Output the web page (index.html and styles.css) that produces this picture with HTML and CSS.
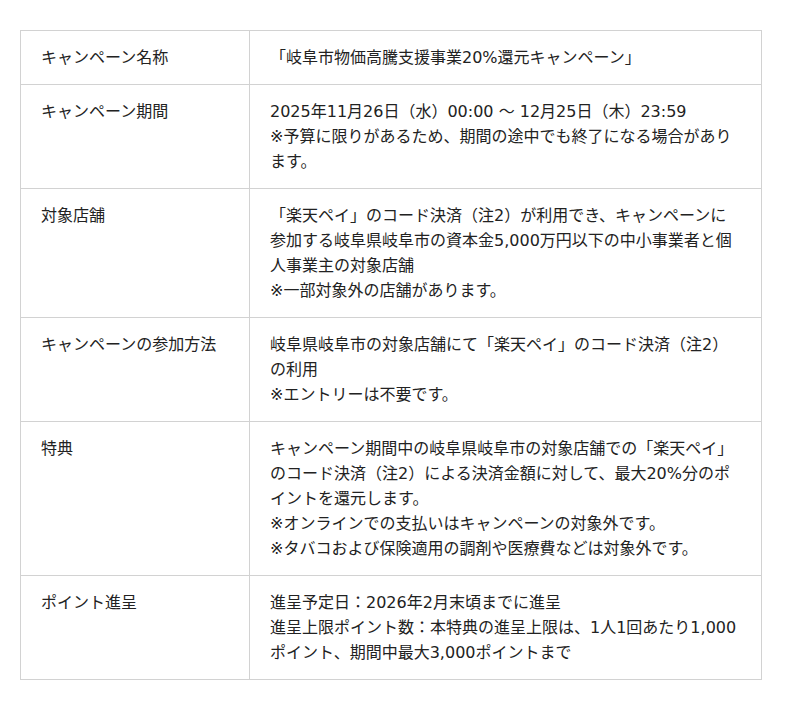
FILE: index.html
```html
<!DOCTYPE html>
<html lang="ja">
<head>
<meta charset="utf-8">
<link rel="stylesheet" href="styles.css">
</head>
<body>
<div class="wrap">
<table class="info">
<tr><th>キャンペーン名称</th><td>「岐阜市物価高騰支援事業20%還元キャンペーン」</td></tr>
<tr><th>キャンペーン期間</th><td>2025年11月26日（水）00:00 ～ 12月25日（木）23:59<br>※予算に限りがあるため、期間の途中でも終了になる場合があります。</td></tr>
<tr><th>対象店舗</th><td>「楽天ペイ」のコード決済（注2）が利用でき、キャンペーンに参加する岐阜県岐阜市の資本金5,000万円以下の中小事業者と個人事業主の対象店舗<br>※一部対象外の店舗があります。</td></tr>
<tr><th>キャンペーンの参加方法</th><td>岐阜県岐阜市の対象店舗にて「楽天ペイ」のコード決済（注2）の利用<br>※エントリーは不要です。</td></tr>
<tr><th>特典</th><td>キャンペーン期間中の岐阜県岐阜市の対象店舗での「楽天ペイ」のコード決済（注2）による決済金額に対して、最大20%分のポイントを還元します。<br>※オンラインでの支払いはキャンペーンの対象外です。<br>※タバコおよび保険適用の調剤や医療費などは対象外です。</td></tr>
<tr><th>ポイント進呈</th><td>進呈予定日：2026年2月末頃までに進呈<br>進呈上限ポイント数：本特典の進呈上限は、1人1回あたり1,000ポイント、期間中最大3,000ポイントまで</td></tr>
</table>
</div>
</body>
</html>
```
FILE: styles.css
```css
html, body {
  margin: 0;
  padding: 0;
  background: #fff;
}
.wrap {
  padding: 30px 38px 0 20px;
}
.info {
  width: 742px;
  border-collapse: collapse;
  font-family: "DejaVu Sans", "Noto Sans CJK JP", sans-serif;
  font-size: 16px;
  line-height: 25px;
  color: #222;
}
.info th, .info td {
  border: 1px solid #d2d2d2;
  padding: 14px 20px;
  text-align: left;
  vertical-align: top;
  font-weight: normal;
}
.info th {
  width: 188px;
}
```
